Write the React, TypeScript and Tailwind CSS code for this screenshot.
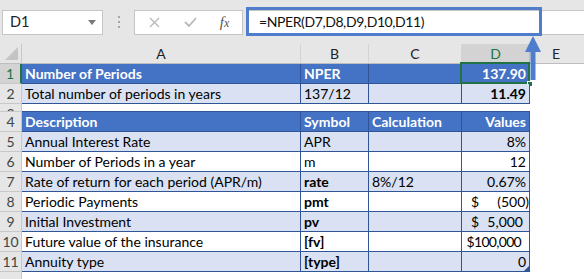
import React from 'react';

type Cell = {
  text?: string;
  bold?: boolean;
  right?: boolean;
  money?: string; // accounting format: "$" left, amount right
  paren?: boolean;
};

type Row = {
  n: number;
  kind: 'head' | 'band' | 'plain' | 'empty';
  cells: Cell[];
};

const ROWS: Row[] = [
  {
    n: 1,
    kind: 'head',
    cells: [{ text: 'Number of Periods' }, { text: 'NPER' }, {}, { text: '137.90', right: true }],
  },
  {
    n: 2,
    kind: 'band',
    cells: [{ text: 'Total number of periods in years' }, { text: '137/12' }, {}, { text: '11.49', right: true, bold: true }],
  },
  { n: 3, kind: 'empty', cells: [] },
  {
    n: 4,
    kind: 'head',
    cells: [{ text: 'Description' }, { text: 'Symbol' }, { text: 'Calculation' }, { text: 'Values', right: true }],
  },
  {
    n: 5,
    kind: 'band',
    cells: [{ text: 'Annual Interest Rate' }, { text: 'APR' }, {}, { text: '8%', right: true }],
  },
  {
    n: 6,
    kind: 'plain',
    cells: [{ text: 'Number of Periods in a year' }, { text: 'm' }, {}, { text: '12', right: true }],
  },
  {
    n: 7,
    kind: 'band',
    cells: [{ text: 'Rate of return for each period (APR/m)' }, { text: 'rate', bold: true }, { text: '8%/12' }, { text: '0.67%', right: true }],
  },
  {
    n: 8,
    kind: 'plain',
    cells: [{ text: 'Periodic Payments' }, { text: 'pmt', bold: true }, {}, { money: '(500)', paren: true }],
  },
  {
    n: 9,
    kind: 'band',
    cells: [{ text: 'Initial Investment' }, { text: 'pv', bold: true }, {}, { money: '5,000' }],
  },
  {
    n: 10,
    kind: 'plain',
    cells: [{ text: 'Future value of the insurance' }, { text: '[fv]', bold: true }, {}, { text: '$100,000', right: true }],
  },
  {
    n: 11,
    kind: 'band',
    cells: [{ text: 'Annuity type' }, { text: '[type]', bold: true }, {}, { text: '0', right: true }],
  },
];

const COL_W = ['w-[279px]', 'w-[68px]', 'w-[93px]', 'w-[68px]'];
const CELL_FONT = { fontFamily: 'Lato, "Liberation Sans", sans-serif' };

function FormulaBar() {
  return (
    <div className="relative h-[44px] bg-[#e6e6e6] flex items-center" style={CELL_FONT}>
      {/* Name box */}
      <div className="ml-[2px] w-[101px] h-[25px] bg-white border border-[#c6c6c6] flex items-center justify-between pl-[7px] pr-[6px]">
        <span className="text-[14.5px] text-[#222]">D1</span>
        <svg width="8" height="5" viewBox="0 0 8 5">
          <path d="M0 0 L8 0 L4 5 Z" fill="#7a7a7a" />
        </svg>
      </div>
      {/* grip dots */}
      <div className="w-[31px] flex flex-col items-center gap-[3px]">
        <span className="w-[2px] h-[2px] bg-[#a6a6a6]" />
        <span className="w-[2px] h-[2px] bg-[#a6a6a6]" />
        <span className="w-[2px] h-[2px] bg-[#a6a6a6]" />
      </div>
      {/* cancel / enter / fx */}
      <div className="w-[109px] h-[25px] bg-white border border-[#c6c6c6] flex items-center">
        <div className="w-[38px] flex justify-center">
          <svg width="11" height="11" viewBox="0 0 11 11">
            <path d="M1 1 L10 10 M10 1 L1 10" stroke="#b9b9b9" strokeWidth="1.4" />
          </svg>
        </div>
        <div className="w-[34px] flex justify-center">
          <svg width="13" height="10" viewBox="0 0 13 10">
            <path d="M1 5 L5 9 L12 1" stroke="#b9b9b9" strokeWidth="1.8" fill="none" />
          </svg>
        </div>
        <div className="flex-1 flex justify-center">
          <span className="italic text-[15px] text-[#555]" style={{ fontFamily: '"Liberation Serif", serif' }}>
            f<span className="text-[12px]">x</span>
          </span>
        </div>
      </div>
      {/* formula input */}
      <div className="ml-[3px] flex-1 h-[25px] bg-white border-y border-[#c6c6c6]" />
      {/* highlighted formula */}
      <div className="absolute left-[246px] top-[7px] w-[296px] h-[29px] border-[3px] border-[#4f7ccb] flex items-center pl-[10px]">
        <span className="text-[14px] tracking-[-0.4px] text-[#111]">=NPER(D7,D8,D9,D10,D11)</span>
      </div>
    </div>
  );
}

function ColumnHeaders() {
  const heads = [
    { label: 'A', w: COL_W[0] },
    { label: 'B', w: COL_W[1] },
    { label: 'C', w: COL_W[2] },
    { label: 'D', w: COL_W[3], active: true },
  ];
  return (
    <div className="flex h-[20px] bg-[#e6e6e6] border-b border-[#bdbdbd]" style={CELL_FONT}>
      <div className="w-[22px] h-full relative border-r border-[#c8c8c8]">
        <svg className="absolute right-[3px] bottom-[3px]" width="13" height="13" viewBox="0 0 13 13">
          <path d="M13 0 L13 13 L0 13 Z" fill="#c4c4c4" />
        </svg>
      </div>
      {heads.map((h) => (
        <div
          key={h.label}
          className={`${h.w} h-full flex items-center justify-center text-[14px] border-r ${
            h.active ? 'bg-[#d3d3d3] text-[#217346] border-[#bdbdbd]' : 'text-[#222] border-[#d4d4d4]'
          }`}
        >
          {h.label}
        </div>
      ))}
      <div className="flex-1 flex items-center justify-center text-[14px] text-[#222] pr-[2px]">E</div>
    </div>
  );
}

function DataCell({ cell, row, col }: { cell: Cell; row: Row; col: number }) {
  const head = row.kind === 'head';
  const bg = head ? 'bg-[#4472c4]' : row.kind === 'band' ? 'bg-[#d9e1f2]' : 'bg-white';
  const color = head ? 'text-white font-bold' : cell.bold ? 'text-black font-bold' : 'text-black';
  return (
    <div
      className={`${COL_W[col]} h-full relative flex items-center border-r border-b border-[#2f5597] ${bg} ${color} text-[14px] ${
        cell.right ? 'justify-end pr-[3px]' : 'pl-[3px]'
      }`}
    >
      {cell.money ? (
        <>
          <span className="ml-[6px]">$</span>
          <span className={`ml-auto ${cell.paren ? 'mr-[0px]' : 'mr-[6px]'}`}>{cell.money}</span>
        </>
      ) : (
        <span className={`whitespace-nowrap ${cell.text === '$100,000' ? 'mr-[5px] tracking-[-0.7px]' : ''}`}>{cell.text}</span>
      )}
      {row.n === 11 && col === 3 && (
        <svg className="absolute right-0 bottom-0" width="5" height="5" viewBox="0 0 5 5">
          <path d="M5 0 L5 5 L0 5 Z" fill="#2f5597" />
        </svg>
      )}
      {row.n === 1 && col === 3 && (
        <>
          <div className="absolute -left-[2px] -top-[2px] -right-[1px] -bottom-[1px] border-2 border-[#217346]" />
          <div className="absolute -right-[4px] -bottom-[4px] w-[6px] h-[6px] bg-[#217346] border border-white" />
        </>
      )}
    </div>
  );
}

function SheetRow({ row }: { row: Row }) {
  const empty = row.kind === 'empty';
  const active = row.n === 1;
  return (
    <div className={`flex ${empty ? 'h-[8px]' : 'h-[20px]'}`} style={CELL_FONT}>
      <div
        className={`w-[22px] h-full flex items-start justify-center overflow-hidden text-[14px] border-b border-r ${
          active ? 'bg-[#d3d3d3] text-[#217346] border-b-[#c8c8c8] border-r-[#217346] border-r-2' : 'bg-[#e6e6e6] text-[#444] border-[#c8c8c8]'
        }`}
      >
        <span className={`block leading-[19px] ${empty ? 'h-[7px] overflow-hidden' : ''}`}>{row.n}</span>
      </div>
      {empty ? (
        <div className="w-[508px] h-full bg-white border-b border-[#2f5597]" />
      ) : (
        row.cells.map((c, i) => <DataCell key={i} cell={c} row={row} col={i} />)
      )}
      <div className="flex-1 bg-white" />
    </div>
  );
}

export default function App() {
  return (
    <div className="relative w-[584px] h-[279px] overflow-hidden bg-white">
      <FormulaBar />
      <ColumnHeaders />
      {ROWS.map((r) => (
        <SheetRow key={r.n} row={r} />
      ))}
      <div className="flex h-[20px]">
        <div className="w-[22px] h-full bg-[#e6e6e6] border-r border-[#c8c8c8]" />
      </div>
      {/* annotation arrow */}
      <svg className="absolute left-[524px] top-[36px]" width="18" height="44" viewBox="0 0 18 44">
        <path d="M9 0 L17 16 L1 16 Z" fill="#4f7ccb" />
        <rect x="6.5" y="15" width="5" height="29" fill="#4f7ccb" />
      </svg>
    </div>
  );
}
